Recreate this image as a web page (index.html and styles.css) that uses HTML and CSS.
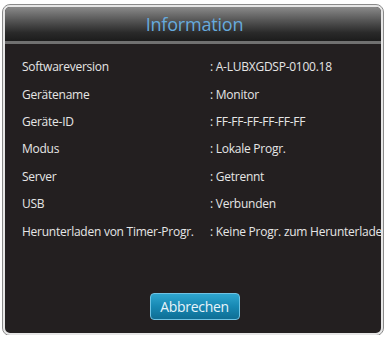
FILE: index.html
```html
<!DOCTYPE html>
<html lang="de">
<head>
    <meta charset="UTF-8">
    <title>Information</title>
    <link rel="stylesheet" href="styles.css">
</head>
<body>

    <div class="dialog">
        <div class="dialog-header">
            <h2>Information</h2>
        </div>
        <div class="dialog-body">
            <div class="info-row"><span class="info-label">Softwareversion</span><span class="info-value">: A-LUBXGDSP-0100.18</span></div>
            <div class="info-row"><span class="info-label">Gerätename</span><span class="info-value">: Monitor</span></div>
            <div class="info-row"><span class="info-label">Geräte-ID</span><span class="info-value">: FF-FF-FF-FF-FF-FF</span></div>
            <div class="info-row"><span class="info-label">Modus</span><span class="info-value">: Lokale Progr.</span></div>
            <div class="info-row"><span class="info-label">Server</span><span class="info-value">: Getrennt</span></div>
            <div class="info-row"><span class="info-label">USB</span><span class="info-value">: Verbunden</span></div>
            <div class="info-row"><span class="info-label">Herunterladen von Timer-Progr.</span><span class="info-value">: Keine Progr. zum Herunterladen</span></div>
        </div>
        <div class="dialog-footer">
            <button type="button" class="cancel-btn">Abbrechen</button>
        </div>
    </div>

</body>
</html>
```

FILE: styles.css
```css
/* Info dialog */
body {
    font-family: "Open Sans", Arial, sans-serif;
    background-color: #fff;
    margin: 0;
    padding: 5px 4px 0 3px;
}

.dialog {
    width: 376px;
    height: 326px;
    background-color: #231f20;
    border: 2px solid #e6e6e6;
    outline: 1px solid #8a8a8a;
    border-radius: 7px;
    overflow: hidden;
    display: flex;
    flex-direction: column;
}

.dialog-header {
    height: 34px;
    background: linear-gradient(to bottom, #8a8a8a 0%, #555 40%, #2a2a2a 75%, #1c1c1c 100%);
    border-bottom: 3px solid #707070;
    display: flex;
    align-items: center;
    justify-content: center;
}

.dialog-header h2 {
    margin: 0 0 0 3px;
    font-size: 18px;
    font-weight: normal;
    color: #66aadd;
    letter-spacing: -0.2px;
}

.dialog-body {
    padding: 9px 0 0 17px;
    white-space: nowrap;
}

.info-row {
    display: grid;
    grid-template-columns: 188px auto;
    height: 27.4px;
    align-items: center;
    font-size: 12px;
    color: #e6e6e6;
    letter-spacing: -0.25px;
}

.dialog-footer {
    margin-top: auto;
    padding-bottom: 13px;
    display: flex;
    justify-content: center;
}

.cancel-btn {
    font-family: "Open Sans", Arial, sans-serif;
    font-size: 14px;
    letter-spacing: -0.3px;
    color: #e8f4fa;
    width: 90px;
    height: 27px;
    margin-left: 3px;
    border: 1px solid #6fc3e4;
    border-radius: 4px;
    background: linear-gradient(to bottom, #2fa6cf 0%, #1788b3 50%, #0f6e94 100%);
    cursor: pointer;
}
```
